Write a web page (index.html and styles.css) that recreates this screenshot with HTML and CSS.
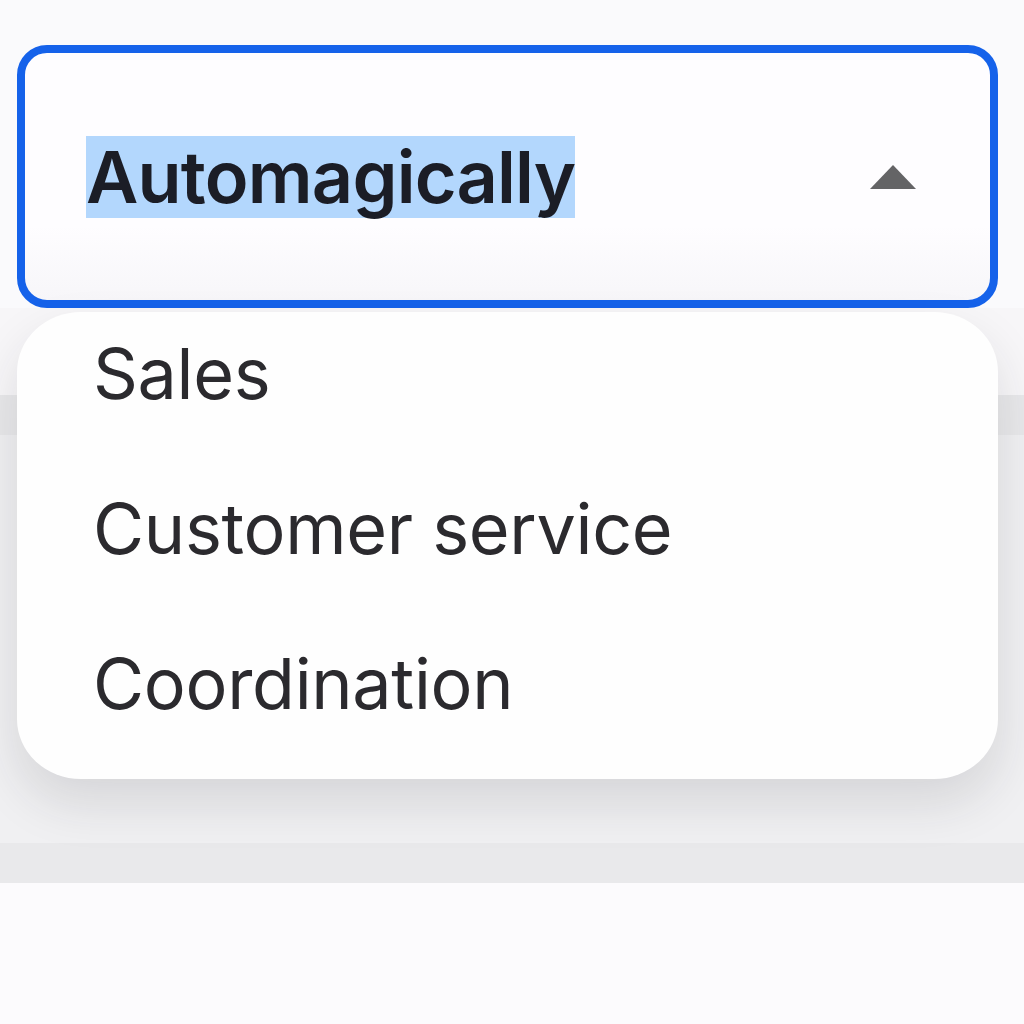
FILE: index.html
```html
<!DOCTYPE html>
<html lang="en">
<head>
<meta charset="utf-8">
<title>Select</title>
<link rel="stylesheet" href="styles.css">
</head>
<body>
<div class="page">
  <div class="field-row">
    <div class="select">
      <span class="value">Automagically</span>
      <svg class="caret" width="46" height="24" viewBox="0 0 46 24" aria-hidden="true"><polygon points="23,0 46,24 0,24" fill="#646466"/></svg>
    </div>
  </div>
  <div class="backdrop">
    <div class="band band-a"></div>
    <div class="band band-b"></div>
    <div class="band band-c"></div>
    <div class="band band-d"></div>
    <div class="band band-e"></div>
  </div>
  <ul class="menu">
    <li class="item">Sales</li>
    <li class="item">Customer service</li>
    <li class="item">Coordination</li>
  </ul>
</div>
</body>
</html>
```
FILE: styles.css
```css
html, body {
  margin: 0;
  padding: 0;
  background: #fbfafc;
  font-family: "Inter", "Noto Sans", sans-serif;
}

.page {
  position: relative;
  width: 1024px;
  height: 1024px;
  overflow: hidden;
}

.field-row {
  padding: 45px 26px 0 17px;
  background: #fafafc;
}

.select {
  box-sizing: border-box;
  height: 263px;
  border: 8px solid #1562ea;
  border-radius: 30px;
  background: linear-gradient(#fefdff 70%, #f7f6f9);
  display: flex;
  align-items: center;
  justify-content: space-between;
  padding: 0 74px 0 61px;
}

.value {
  font-size: 72px;
  font-weight: 600;
  letter-spacing: -0.8px;
  line-height: 82px;
  color: #1b1d26;
  background: #b3d7fd;
}

.caret {
  display: block;
}

.backdrop {
  display: flex;
  flex-direction: column;
}

.band-a { height: 87px; background: #f7f6f8; }
.band-b { height: 40px; background: #e8e8ea; }
.band-c { height: 408px; background: #f0f0f2; }
.band-d { height: 40px; background: #e9e9eb; }
.band-e { height: 200px; background: #fcfbfd; }

.menu {
  position: absolute;
  top: 312px;
  left: 17px;
  width: 981px;
  height: 467px;
  box-sizing: border-box;
  margin: 0;
  padding: 0;
  list-style: none;
  background: #fefefe;
  border-radius: 64px / 60px;
  box-shadow: 0 24px 50px rgba(40, 36, 50, 0.13);
}

.item {
  height: 155px;
  box-sizing: border-box;
  padding: 20px 0 0 76px;
  font-size: 70px;
  font-weight: 400;
  letter-spacing: -0.3px;
  line-height: 84px;
  color: #2b2a2e;
}
```
